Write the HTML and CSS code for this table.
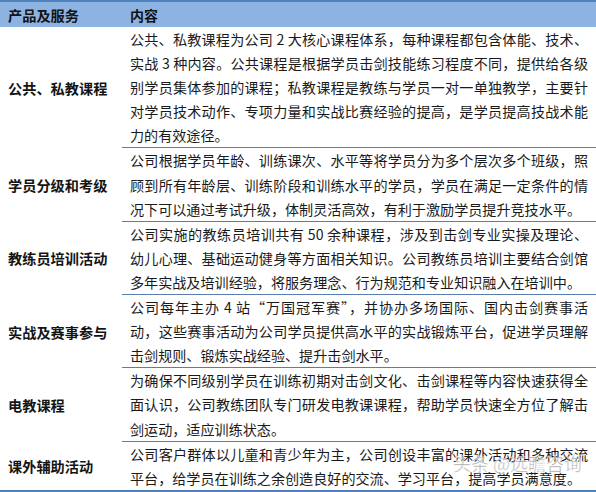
FILE: index.html
```html
<!DOCTYPE html>
<html lang="zh">
<head>
<meta charset="utf-8">
<link rel="stylesheet" href="styles.css">
</head>
<body>
<div class="table">
  <div class="head">
    <div class="hcell label">产品及服务</div>
    <div class="hcell">内容</div>
  </div>
  <div class="row">
    <div class="label">公共、私教课程</div>
    <div class="content">
      <div class="ln">公共、私教课程为公司 2 大核心课程体系，每种课程都包含体能、技术、</div>
      <div class="ln">实战 3 种内容。公共课程是根据学员击剑技能练习程度不同，提供给各级</div>
      <div class="ln">别学员集体参加的课程；私教课程是教练与学员一对一单独教学，主要针</div>
      <div class="ln">对学员技术动作、专项力量和实战比赛经验的提高，是学员提高技战术能</div>
      <div class="ln last">力的有效途径。</div>
    </div>
  </div>
  <div class="row">
    <div class="label">学员分级和考级</div>
    <div class="content">
      <div class="ln">公司根据学员年龄、训练课次、水平等将学员分为多个层次多个班级，照</div>
      <div class="ln">顾到所有年龄层、训练阶段和训练水平的学员，学员在满足一定条件的情</div>
      <div class="ln last">况下可以通过考试升级，体制灵活高效，有利于激励学员提升竞技水平。</div>
    </div>
  </div>
  <div class="row">
    <div class="label">教练员培训活动</div>
    <div class="content">
      <div class="ln">公司实施的教练员培训共有 50 余种课程，涉及到击剑专业实操及理论、</div>
      <div class="ln">幼儿心理、基础运动健身等方面相关知识。公司教练员培训主要结合剑馆</div>
      <div class="ln last">多年实战及培训经验，将服务理念、行为规范和专业知识融入在培训中。</div>
    </div>
  </div>
  <div class="row">
    <div class="label">实战及赛事参与</div>
    <div class="content">
      <div class="ln">公司每年主办 4 站“万国冠军赛”，并协办多场国际、国内击剑赛事活</div>
      <div class="ln">动，这些赛事活动为公司学员提供高水平的实战锻炼平台，促进学员理解</div>
      <div class="ln last">击剑规则、锻炼实战经验、提升击剑水平。</div>
    </div>
  </div>
  <div class="row">
    <div class="label">电教课程</div>
    <div class="content">
      <div class="ln">为确保不同级别学员在训练初期对击剑文化、击剑课程等内容快速获得全</div>
      <div class="ln">面认识，公司教练团队专门研发电教课课程，帮助学员快速全方位了解击</div>
      <div class="ln last">剑运动，适应训练状态。</div>
    </div>
  </div>
  <div class="row final">
    <div class="label">课外辅助活动</div>
    <div class="content">
      <div class="ln">公司客户群体以儿童和青少年为主，公司创设丰富的课外活动和多种交流</div>
      <div class="ln last">平台，给学员在训练之余创造良好的交流、学习平台，提高学员满意度。</div>
    </div>
  </div>
  <div class="watermark">头条 @远瞻咨询</div>
</div>
</body>
</html>
```

FILE: styles.css
```css
html, body {
  margin: 0;
  padding: 0;
  background: #ffffff;
}

body {
  width: 596px;
  height: 492px;
  overflow: hidden;
  font-family: "Noto Sans CJK SC", "Microsoft YaHei", "Liberation Sans", sans-serif;
  color: #1a1a1a;
}

.table {
  position: relative;
  width: 596px;
  border-top: 2px solid #4f81bd;
  border-bottom: 3px solid #4f81bd;
}

.head {
  display: grid;
  grid-template-columns: 122px 1fr;
  height: 25px;
  background: #8db3e2;
  align-items: center;
}

.hcell {
  font-weight: 700;
  font-size: 14px;
  padding-left: 8px;
  color: #141414;
}

.row {
  display: grid;
  grid-template-columns: 122px 1fr;
}

.label {
  display: flex;
  align-items: center;
  padding-left: 8px;
  font-weight: 700;
  font-size: 14.2px;
  color: #141414;
}

.content {
  padding: 0 8px 0 8px;
  border-bottom: 1px solid #5a7db0;
  font-size: 14.1px;
  line-height: 24.1px;
}

.row.final .content {
  border-bottom: none;
}

.ln {
  white-space: nowrap;
  text-align: justify;
  text-align-last: justify;
}

.ln.last {
  text-align-last: left;
}

.watermark {
  position: absolute;
  right: 14px;
  bottom: 14px;
  font-size: 18px;
  color: rgba(140, 140, 140, 0.75);
  -webkit-text-stroke: 0.6px rgba(255, 255, 255, 0.8);
}
```
